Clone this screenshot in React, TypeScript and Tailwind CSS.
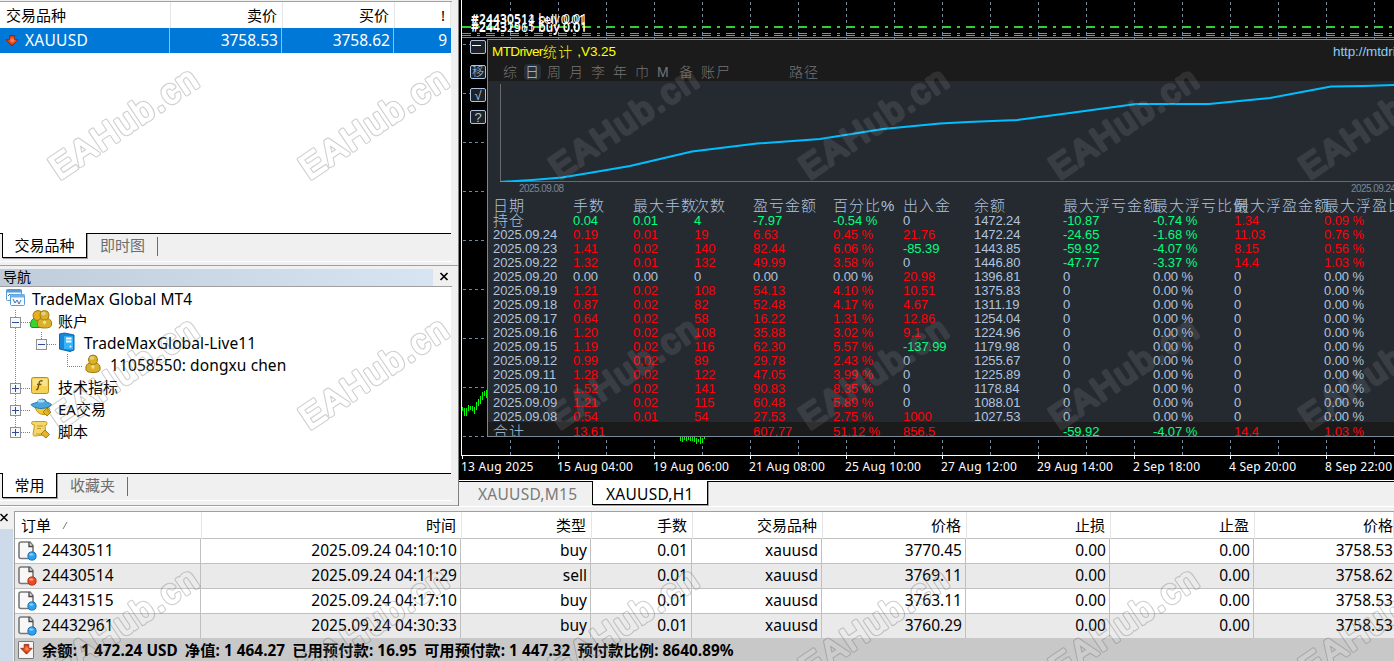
import React from "react";

const UI = "font-['Noto_Sans','Noto_Sans_CJK_SC',sans-serif]";
const CHART = "font-['Liberation_Sans','Noto_Sans_CJK_SC',sans-serif]";

function DownArrow({ className = "" }: { className?: string }) {
  return (
    <svg width="14" height="14" viewBox="0 0 14 14" className={className}>
      <defs>
        <radialGradient id="arrowFill" cx="0.55" cy="0.45" r="0.6">
          <stop offset="0" stopColor="#ff9a5a" />
          <stop offset="0.5" stopColor="#e8431a" />
          <stop offset="1" stopColor="#8f1d08" />
        </radialGradient>
      </defs>
      <path d="M4.500 1.500h5v4.200h3.600L7 12 .8 5.700h3.700z" fill="url(#arrowFill)" stroke="#8c2410" strokeWidth="0.8" />
    </svg>
  );
}

function DocIcon({ color, edge }: { color: string; edge: string }) {
  return (
    <svg width="19" height="20" viewBox="0 0 19 20" className="block">
      <path d="M1 3q0-2 2-2h9l3 3.500v11.500q0 1.500-2 1.500H3q-2 0-2-2z" fill="#f7f7f7" stroke="#787878" strokeWidth="1.600" />
      <path d="M11 1v4.500H15" fill="#dedede" stroke="#444" strokeWidth="1.300" />
      <circle cx="14" cy="15" r="4.100" fill={color} stroke={edge} />
      <ellipse cx="13.300" cy="13.500" rx="2" ry="1.300" fill="#fff" opacity="0.45" />
    </svg>
  );
}

function Person({ x, y, fill, stroke }: { x: number; y: number; fill: string; stroke: string }) {
  return (
    <g transform={`translate(${x} ${y})`}>
      <path d="M1 15.500Q0 9 5 8.500h5.500Q16 9 15 15.500 14 18 8 18t-7-2.500z" fill={fill} stroke={stroke} />
      <path d="M3.500 4.500Q4 .5 8 .5t4.500 4Q12.500 10 8 10T3.500 4.500z" fill={fill} stroke={stroke} />
      <path d="M8 10l-2 2 2 3 2-3z" fill="#fff2a0" opacity="0.7" />
      <ellipse cx="7" cy="3.500" rx="2.500" ry="1.700" fill="#fff" opacity="0.4" />
    </g>
  );
}

function TreeIcon({ kind }: { kind: string }) {
  return (
    <svg width="24" height="22" viewBox="0 0 24 22" className="block">
      {kind === "root" && (
        <g transform="translate(0 1)">
          <rect x="2.500" y="1.500" width="15" height="11" rx="1" fill="#f4faff" stroke="#5b9bd5" />
          <path d="M2.500 3h15" stroke="#5b9bd5" strokeWidth="3" />
          <path d="M4 8l2-2 2 3 2-3" fill="none" stroke="#4472a8" />
          <rect x="6.500" y="6.500" width="14" height="11" rx="1" fill="#f4faff" stroke="#5b9bd5" />
          <path d="M6.500 8h14" stroke="#6fb1ea" strokeWidth="3" />
          <path d="M9 11l2 4 2-3 2 4 2-4" fill="none" stroke="#4472a8" />
        </g>
      )}
      {kind === "accounts" && (
        <g transform="translate(0 .5)">
          <path d="M.5 17Q0 9 6 8h5l2 10H2z" fill="#35d62d" stroke="#16911a" />
          <path d="M3 5Q4 1 8 1t5 4q0 6-5 6T3 5z" fill="#e7ae22" stroke="#a87606" />
          <Person x={6.5} y={0.5} fill="#d9b02a" stroke="#a27a0c" />
        </g>
      )}
      {kind === "server" && (
        <g transform="translate(0 1)">
          <path d="M3.500 2l5-1 9.500 2v15l-4 1.500L3.500 17z" fill="#1687d9" stroke="#0b67ae" />
          <path d="M8 4l9 .5v13L8 17z" fill="#35b4fb" />
          <path d="M10 6.500h5.500M10 9.500h5.500" stroke="#fff" strokeWidth="1.800" />
          <circle cx="14.500" cy="14.500" r="1" fill="#e7f7ff" />
        </g>
      )}
      {kind === "user" && <Person x={3} y={1.5} fill="#d9b02a" stroke="#a27a0c" />}
      {kind === "fx" && (
        <g transform="translate(0 1)">
          <rect x="1.500" y="1.500" width="17" height="16" rx="2" fill="#f5d154" stroke="#b98f22" />
          <path d="M3 3h14v7H3z" fill="#fff" opacity="0.35" />
          <path d="M12.500 5q-3-1-3.300 2l-1 4.500q-.5 2.500-2.200 2M7 8.500h4.500" fill="none" stroke="#7a5605" strokeWidth="1.400" />
        </g>
      )}
      {kind === "ea" && (
        <g transform="translate(0 1)">
          <path d="M5 9q2 7 8 7.500h3l4-5-2-3z" fill="#f0c834" stroke="#bf9418" />
          <path d="M1 6.500Q4 5 7 4.500 8 1 12 1t4.500 3Q20 5 21.500 6.500 20 10 11 10.500 3 10 1 6.500z" fill="#4aa7dc" stroke="#267ab3" />
          <ellipse cx="11" cy="3" rx="3.500" ry="1.500" fill="#a6daf6" />
          <path d="M17 10l4 4-4 4-4-4z" fill="#e2b42c" stroke="#a8800f" />
        </g>
      )}
      {kind === "script" && (
        <g transform="translate(0 1)">
          <path d="M1.500 3q0-1.500 2-1.500h12q1.500 0 1.500 2t-2 2l1 9-10 1.500q-3 .5-3-1.500L4.500 5Q1.500 5 1.500 3z" fill="#f4d66a" stroke="#c29a2c" />
          <path d="M7 6h6M7 8.500h4M6 14h7" stroke="#c29a2c" />
          <path d="M15 10l4.500 4.500-3.500 3.500-5-4z" fill="#e2b42c" stroke="#a8800f" />
        </g>
      )}
    </svg>
  );
}

function MarketWatch() {
  return (
    <section className="flex h-[265px] flex-col">
      <div className="h-px bg-[#f0f0f0]" />
      <div className="h-px w-[452px] bg-[#a0a0a0]" />
      <div className="flex h-[231px] w-[451px] flex-col bg-white">
        <div className="grid h-[26px] shrink-0 grid-cols-[171px_112px_112px_56px] text-[15px] leading-[27px]">
          <div className="border-r border-[#e5e5e5] pl-[6px]">交易品种</div>
          <div className="border-r border-[#e5e5e5] pr-[5px] text-right">卖价</div>
          <div className="border-r border-[#e5e5e5] pr-[5px] text-right">买价</div>
          <div className="border-r border-[#e5e5e5] pr-[5px] text-right">!</div>
        </div>
        <div className="grid h-[25px] shrink-0 grid-cols-[170px_112px_112px_57px] bg-[#0078d7] text-[15.500px] leading-[25px] text-white">
          <div className="flex items-center border-r border-[#8cc0ee] pl-[5px]">
            <DownArrow />
            <span className="ml-[6px] tracking-[0.25px]">XAUUSD</span>
          </div>
          <div className="border-r border-[#8cc0ee] pr-[3px] text-right">3758.53</div>
          <div className="border-r border-[#8cc0ee] pr-[3px] text-right">3758.62</div>
          <div className="pr-[4px] text-right">9</div>
        </div>
      </div>
      <PanelTabs first="交易品种" second="即时图" widths="grid-cols-[85px_71px]" />
      <div className="h-[3px] w-[452px]" />
      <div className="h-px w-[452px] bg-white" />
    </section>
  );
}

function PanelTabs({ first, second, widths }: { first: string; second: string; widths: string }) {
  return (
    <div className="relative h-[25px] w-[451px] shrink-0 border-t border-black pl-[2px] text-[15px] leading-[24px]">
      <div className={`-mt-px grid h-[25px] ${widths}`}>
        <div className="border border-t-0 border-black bg-white text-center shadow-[1px_1px_0_#a0a0a0]">{first}</div>
        <div className="mt-[4px] h-[19px] border-r border-[#6d6d6d] pl-[13px] leading-[16px] text-[#6d6d6d]">{second}</div>
      </div>
    </div>
  );
}

const tree = [
  { kind: "root", label: "TradeMax Global MT4", pad: "pl-[4px]" },
  { kind: "accounts", label: "账户", pad: "pl-[30px]" },
  { kind: "server", label: "TradeMaxGlobal-Live11", pad: "pl-[56px]" },
  { kind: "user", label: "11058550: dongxu chen", pad: "pl-[82px]" },
  { kind: "fx", label: "技术指标", pad: "pl-[30px]" },
  { kind: "ea", label: "EA交易", pad: "pl-[30px]" },
  { kind: "script", label: "脚本", pad: "pl-[30px]" },
];

function TreeLines() {
  const boxes = [
    { x: 10, y: 30, plus: false },
    { x: 36, y: 52, plus: false },
    { x: 10, y: 96, plus: true },
    { x: 10, y: 118, plus: true },
    { x: 10, y: 140, plus: true },
  ];
  return (
    <svg className="absolute left-0 top-0" width="90" height="180" shapeRendering="crispEdges">
      <path
        d="M15.500 23V145M21 35.500H30M41.500 45V55M47 57.500H56M67.500 67V79.500H82M21 101.500H30M21 123.500H30M21 145.500H30"
        fill="none"
        stroke="#808080"
        strokeDasharray="1 1"
      />
      {boxes.map((b) => (
        <g key={`${b.x}-${b.y}`}>
          <rect x={b.x + 0.5} y={b.y + 0.5} width="10" height="10" fill="#f8f8f8" stroke="#919191" />
          <path d={`M${b.x + 2} ${b.y + 5.5}h7${b.plus ? "m-3.500 -3.500v7" : ""}`} stroke="#2b4f9e" />
        </g>
      ))}
    </svg>
  );
}

function Navigator() {
  return (
    <section className="flex h-[241px] flex-col">
      <div className="h-px w-[458px] bg-[#a0a0a0]" />
      <div className="mt-[3px] flex h-[17px] shrink-0">
        <div className="w-[433px] bg-gradient-to-r from-[#bfccda] to-[#d7e4f2] pl-[3px] text-[14px] leading-[16px]">导航</div>
        <svg width="24" height="17" viewBox="0 0 24 17">
          <path d="M7.500 4l7 7M14.500 4l-7 7" stroke="#000" strokeWidth="1.700" />
        </svg>
      </div>
      <div className="h-px w-[452px] shrink-0 bg-[#a0a0a0]" />
      <div className="relative h-[186px] w-[451px] shrink-0 bg-white">
        <TreeLines />
        {tree.map((t) => (
          <div key={t.kind} className={`relative flex h-[22px] items-center ${t.pad}`}>
            <TreeIcon kind={t.kind} />
            <span
              className={`ml-[4px] whitespace-nowrap pt-px leading-[22px] ${/^[\x20-\x7e]+$/.test(t.label) ? "text-[15.500px] tracking-[0.1px]" : "text-[15px]"}`}
            >
              {t.label}
            </span>
          </div>
        ))}
      </div>
      <PanelTabs first="常用" second="收藏夹" widths="grid-cols-[55px_71px]" />
      <div className="h-[2px]" />
      <div className="h-px w-[452px] bg-white" />
      <div className="mt-[4px] h-px w-[458px] shrink-0 bg-[#a0a0a0]" />
    </section>
  );
}

const D = "text-[#b0c4de]";
const R = "text-[#ff0008]";
const G = "text-[#00ff7f]";

const headers = ["日期", "手数", "最大手数", "次数", "盈亏金额", "百分比%", "出入金", "余额", "最大浮亏金额", "最大浮亏比例", "最大浮盈金额", "最大浮盈比例"];

const rows: string[][] = [
  ["持仓", "0.04", "0.01", "4", "-7.97", "-0.54 %", "0", "1472.24", "-10.87", "-0.74 %", "1.34", "0.09 %"],
  ["2025.09.24", "0.19", "0.01", "19", "6.63", "0.45 %", "21.76", "1472.24", "-24.65", "-1.68 %", "11.03", "0.76 %"],
  ["2025.09.23", "1.41", "0.02", "140", "82.44", "6.06 %", "-85.39", "1443.85", "-59.92", "-4.07 %", "8.15", "0.56 %"],
  ["2025.09.22", "1.32", "0.01", "132", "49.99", "3.58 %", "0", "1446.80", "-47.77", "-3.37 %", "14.4", "1.03 %"],
  ["2025.09.20", "0.00", "0.00", "0", "0.00", "0.00 %", "20.98", "1396.81", "0", "0.00 %", "0", "0.00 %"],
  ["2025.09.19", "1.21", "0.02", "108", "54.13", "4.10 %", "10.51", "1375.83", "0", "0.00 %", "0", "0.00 %"],
  ["2025.09.18", "0.87", "0.02", "82", "52.48", "4.17 %", "4.67", "1311.19", "0", "0.00 %", "0", "0.00 %"],
  ["2025.09.17", "0.64", "0.02", "58", "16.22", "1.31 %", "12.86", "1254.04", "0", "0.00 %", "0", "0.00 %"],
  ["2025.09.16", "1.20", "0.02", "108", "35.88", "3.02 %", "9.1", "1224.96", "0", "0.00 %", "0", "0.00 %"],
  ["2025.09.15", "1.19", "0.02", "116", "62.30", "5.57 %", "-137.99", "1179.98", "0", "0.00 %", "0", "0.00 %"],
  ["2025.09.12", "0.99", "0.02", "89", "29.78", "2.43 %", "0", "1255.67", "0", "0.00 %", "0", "0.00 %"],
  ["2025.09.11", "1.28", "0.02", "122", "47.05", "3.99 %", "0", "1225.89", "0", "0.00 %", "0", "0.00 %"],
  ["2025.09.10", "1.52", "0.02", "141", "90.83", "8.35 %", "0", "1178.84", "0", "0.00 %", "0", "0.00 %"],
  ["2025.09.09", "1.21", "0.02", "115", "60.48", "5.89 %", "0", "1088.01", "0", "0.00 %", "0", "0.00 %"],
  ["2025.09.08", "0.54", "0.01", "54", "27.53", "2.75 %", "1000", "1027.53", "0", "0.00 %", "0", "0.00 %"],
];
const total = ["合计", "13.61", "", "", "607.77", "51.12 %", "856.5", "", "-59.92", "-4.07 %", "14.4", "1.03 %"];

const COLS = "grid grid-cols-[80px_60px_61px_59px_80px_70px_71px_89px_90px_81px_90px_70px] w-[901px] whitespace-nowrap";

function tone(value: string, col: number, first: boolean) {
  if (col === 0 || col === 7 || parseFloat(value) === 0) return D;
  if (value.startsWith("-")) return G;
  if (first && col < 4) return G;
  return R;
}

function StatRow({ cells, first = false }: { cells: string[]; first?: boolean }) {
  return (
    <div className={`${COLS} h-[14px] text-[13px] leading-[14px] tracking-[-0.1px]`}>
      {cells.map((c, i) => (
        <div key={i} className={`h-[14px] ${tone(c, i, first)} ${i === 0 && !c.startsWith("2") ? "text-[15px] font-light tracking-[1px]" : ""}`}>
          {c}
        </div>
      ))}
    </div>
  );
}

const menu = [
  { t: "综", w: "w-[22px]" },
  { t: "日", w: "w-[22px]" },
  { t: "周", w: "w-[22px]" },
  { t: "月", w: "w-[22px]" },
  { t: "李", w: "w-[22px]" },
  { t: "年", w: "w-[22px]" },
  { t: "巾", w: "w-[22px]" },
  { t: "M", w: "w-[22px]" },
  { t: "备", w: "w-[22px]" },
  { t: "账尸", w: "w-[88px]" },
  { t: "路径", w: "w-[40px]" },
];

function StatsPanel() {
  return (
    <div className={`flex h-[398px] w-[907px] flex-col border-b border-l border-t border-[#778899] bg-[#252a31] ${CHART}`}>
      <div className="h-[41px] shrink-0 bg-[#1b1b1b]">
        <div className="flex h-[22px] items-center justify-between pl-[4px] text-[13.500px] leading-[24px]">
          <div className="flex whitespace-pre pt-px text-[#ffff00]">
            <span className="tracking-[-0.6px]">MTDriver</span>
            <span className="text-[14px] font-light tracking-[1.500px]">统计</span>
            <span className="tracking-[-0.1px]"> ,V3.25</span>
          </div>
          <div className="w-[61px] overflow-hidden whitespace-nowrap pt-px tracking-[-0.1px] text-[#87cefa]">http://mtdriver</div>
        </div>
        <div className="flex h-[19px] pl-[15px] text-[14px] font-light leading-[21px] text-[#757575]">
          {menu.map((m) => (
            <div key={m.t} className={`${m.w} shrink-0 tracking-[1px]`}>
              {m.t === "日" ? (
                <span className="-ml-px mt-[2px] block h-[16px] w-[17px] rounded-sm bg-[#252f3a] text-center leading-[17px] text-[#b0c4de]">日</span>
              ) : (
                m.t
              )}
            </div>
          ))}
        </div>
      </div>
      <svg className="block h-[101px] w-[906px] shrink-0" viewBox="488 81 906 101">
        <path d="M500.500 84V181.500H1394" fill="none" stroke="#696969" shapeRendering="crispEdges" />
        <path
          d="M500 182L532 180 562 177.500 592 172.500 630 166 692 151.500 757 143.500 820 139 883 129 940 123.500 968 122 1017 120 1070 113 1136 104 1209 104 1270 98 1331 86.500 1364 86 1394 85"
          fill="none"
          stroke="#00bfff"
          strokeWidth="2"
        />
      </svg>
      <div className="flex h-[16px] shrink-0 justify-between pl-[31px] text-[10px] leading-[14px] tracking-[-0.550px] text-[#778899]">
        <span>2025.09.08</span>
        <span className="w-[43px] overflow-hidden">2025.09.24</span>
      </div>
      <div className="h-[224px] shrink-0 pl-[5px]">
        <div className={`${COLS} h-[16px] text-[15px] font-light leading-[16px] tracking-[1px] ${D}`}>
          {headers.map((h) => (
            <div key={h}>{h}</div>
          ))}
        </div>
        {rows.map((r, i) => (
          <StatRow key={i} cells={r} first={i === 0} />
        ))}
      </div>
      <div className="h-[14px] overflow-hidden bg-[#1b1b1b] pl-[5px] pt-[3px]">
        <StatRow cells={total} />
      </div>
    </div>
  );
}

const gridX = Array.from({ length: 19 }, (_, i) => 510 + i * 48);
const gridY = [44, 93, 142, 191, 240, 289, 338, 387, 436];
const times = ["13 Aug 2025", "15 Aug 04:00", "19 Aug 06:00", "21 Aug 08:00", "25 Aug 10:00", "27 Aug 12:00", "29 Aug 14:00", "2 Sep 18:00", "4 Sep 20:00", "8 Sep 22:00"];

function ChartBackdrop() {
  const left = [[462, 407, 411], [464, 408, 416], [466, 408, 416], [468, 405, 411], [470, 406, 410], [472, 406, 411], [474, 407, 414], [476, 402, 410], [478, 399, 406], [480, 396, 404], [482, 393, 401], [484, 393, 398], [486, 393, 401]];
  const right = [[680, 437, 441], [682, 437, 442], [684, 437, 440], [686, 437, 441], [688, 437, 440], [690, 437, 441], [692, 437, 441], [694, 437, 442], [696, 438, 444], [698, 439, 442], [700, 437, 444], [702, 438, 443], [704, 437, 439]];
  return (
    <svg className="absolute left-0 top-0" width="935" height="480" viewBox="459 0 935 480" shapeRendering="crispEdges">
      {gridX.map((x) => (
        <path key={x} d={`M${x + 0.5} 2V39M${x + 0.5} 440V455`} stroke="#778899" strokeDasharray="3 3" />
      ))}
      {gridY.map((y) => (
        <path key={y} d={`M463 ${y + 0.5}H487`} stroke="#778899" strokeDasharray="3 3" />
      ))}
      <g stroke="#32cd32" strokeDasharray="9 6 3 6">
        <path d="M462 27H1394" strokeWidth="2" />
        <path d="M462 33.500H1394M462 35.500H1394" />
      </g>
      <path d="M462 37.500H1394" stroke="#778899" />
      <path d="M461.500 0V455.500H1394" fill="none" stroke="#fff" />
      {Array.from({ length: 10 }, (_, i) => (
        <path key={i} d={`M${462.5 + i * 96} 455v4`} stroke="#fff" />
      ))}
      {left.map(([x, a, b], i) => (
        <path key={x} d={`M${x + 0.5} ${a - Math.max(0, i - 9)}V${b - Math.max(0, i - 9)}`} stroke="#00ff00" />
      ))}
      {right.map(([x, a, b]) => (
        <path key={x} d={`M${x + 0.5} ${a}V${b}`} stroke="#00ff00" />
      ))}
    </svg>
  );
}

function SideButtons() {
  const box = "h-[14px] w-[16px] overflow-hidden rounded-[2px] border border-[#b0c4de] bg-[#1d2228] text-center text-[13px] leading-[13px] text-[#b0c4de]";
  return (
    <div className={`flex w-[28px] flex-col items-start pl-[11px] pt-[1px] ${CHART}`}>
      <div className={box}>
        <svg width="14" height="12"><path d="M1 4.500h9" stroke="#fff" shapeRendering="crispEdges" /></svg>
      </div>
      <div className={`${box} mt-[11px] font-light`}>
        <span className="block text-[12px] leading-[12px]">移</span>
      </div>
      <div className={`${box} mt-[9px]`}>√</div>
      <div className={`${box} mt-[8px]`}>?</div>
    </div>
  );
}

function ChartArea() {
  const order = `absolute left-[12px] whitespace-nowrap text-[12px] leading-[12px] text-white tracking-[0.150px] ${UI}`;
  return (
    <section className="relative h-[480px] w-[935px] overflow-hidden bg-black">
      <ChartBackdrop />
      <div className={`${order} top-[13px]`}>#24430511 buy 0.01</div>
      <div className={`${order} top-[14px]`}>#24430514 sell 0.01</div>
      <div className={`${order} top-[21px]`}>#24431515 buy 0.01</div>
      <div className={`${order} top-[22px]`}>#24432961 buy 0.01</div>
      <div className="relative flex pt-[39px]">
        <SideButtons />
        <StatsPanel />
      </div>
      <div className={`relative mt-[22px] flex pl-[2px] text-[12px] leading-[16px] tracking-[0.250px] text-white ${UI}`}>
        {times.map((t) => (
          <div key={t} className="w-[96px] shrink-0 whitespace-nowrap">{t}</div>
        ))}
      </div>
    </section>
  );
}

function ChartTabs() {
  return (
    <div className="flex h-[25px] border-t border-white text-[15.500px] leading-[24px] tracking-[0.250px]">
      <div className="w-[133px] border-t border-black pl-[19px] text-[#7a7a7a]">XAUUSD,M15</div>
      <div className="h-[24px] w-[116px] border border-t-0 border-black bg-white pl-[13px] pt-px shadow-[1px_1px_0_#a0a0a0]">XAUUSD,H1</div>
      <div className="flex-1 border-t border-black" />
    </div>
  );
}

const orders = [
  ["24430511", "2025.09.24 04:10:10", "buy", "0.01", "xauusd", "3770.45", "0.00", "0.00", "3758.53"],
  ["24430514", "2025.09.24 04:11:29", "sell", "0.01", "xauusd", "3769.11", "0.00", "0.00", "3758.62"],
  ["24431515", "2025.09.24 04:17:10", "buy", "0.01", "xauusd", "3763.11", "0.00", "0.00", "3758.53"],
  ["24432961", "2025.09.24 04:30:33", "buy", "0.01", "xauusd", "3760.29", "0.00", "0.00", "3758.53"],
];
const orderHeads = ["时间", "类型", "手数", "交易品种", "价格", "止损", "止盈", "价格"];

function Terminal() {
  return (
    <section className="flex h-[150px]">
      <div className="flex w-[14px] flex-col">
        <div className="h-[18px]">
          <svg width="10" height="14"><path d="M.5 3l7 7M7.500 3l-7 7" stroke="#000" strokeWidth="1.500" /></svg>
        </div>
        <div className="w-[13px] flex-1 bg-[#cddaea]" />
      </div>
      <div className="w-[1380px] overflow-hidden border-l border-t border-[#a0a0a0] bg-white">
        <div className="grid h-[26px] grid-cols-[187px_260px_130px_101px_130px_144px_144px_144px_139px] text-[15px] leading-[27px]">
          <div className="flex items-center border-r border-[#e5e5e5] pl-[6px]">
            订单
            <svg width="8" height="10" className="ml-[11px]"><path d="M1 8L5 1" stroke="#777" /></svg>
          </div>
          {orderHeads.map((h, i) => (
            <div key={i} className={`border-r border-[#e5e5e5] text-right ${i === 7 ? "pr-0" : "pr-[5px]"}`}>{h}</div>
          ))}
        </div>
        {orders.map((o, r) => (
          <div
            key={r}
            className={`grid h-[25px] grid-cols-[186px_260px_130px_101px_130px_144px_144px_144px_140px] border-t border-[#c0c0c0] text-[15.500px] leading-[23px] ${r % 2 ? "bg-[#eaeaea]" : "bg-white"}`}
          >
            {o.map((c, i) =>
              i === 0 ? (
                <div key={i} className="flex items-center border-r border-[#c0c0c0] pl-[3px]">
                  <DocIcon color={r === 1 ? "#ee4a22" : "#2aa2f0"} edge={r === 1 ? "#b0300f" : "#0f70bb"} />
                  <span className="ml-[5px] -translate-y-px tracking-[0.1px]">{c}</span>
                </div>
              ) : (
                <div key={i} className={`text-right ${i === 8 ? "pr-[1px]" : "border-r border-[#c0c0c0] pr-[3px]"} ${i === 1 ? "tracking-[0.050px]" : ""}`}>{c}</div>
              ),
            )}
          </div>
        ))}
        <div className="flex h-[23px] items-center bg-[#c8c8c8] pl-[3px]">
          <div className="flex h-[18px] w-[16px] items-center justify-center rounded-[1px] border border-[#777] bg-[#f5f5f5]">
            <DownArrow className="h-[13px] w-[13px] shrink-0" />
          </div>
          <div className="ml-[8px] flex gap-[7px] whitespace-nowrap pt-[2px] text-[15.300px] font-bold leading-[23px] tracking-[0.060px]">
            <span>余额: 1 472.24 USD</span>
            <span>净值: 1 464.27</span>
            <span>已用预付款: 16.95</span>
            <span>可用预付款: 1 447.32</span>
            <span>预付款比例: 8640.89%</span>
          </div>
        </div>
      </div>
    </section>
  );
}

function Watermarks() {
  const marks: number[][] = [];
  for (let y = 0; y < 3; y++) for (let x = 0; x < 6; x++) marks.push([124 + x * 250, 124 + y * 250]);
  const text = {
    x: 0,
    y: 10.5,
    textAnchor: "middle" as const,
    textLength: 170,
    fontSize: 34,
    fontFamily: "Liberation Sans, sans-serif",
    strokeLinejoin: "round" as const,
  };
  return (
    <svg className="pointer-events-none absolute left-0 top-0" width="1394" height="661">
      <defs>
        <mask id="ring" maskUnits="userSpaceOnUse" x="-100" y="-40" width="200" height="80">
          <text {...text} fill="#fff" stroke="#fff" strokeWidth="4">EAHub.cn</text>
          <text {...text} fill="#000" stroke="#000" strokeWidth="2">EAHub.cn</text>
        </mask>
      </defs>
      {marks.map(([x, y]) => (
        <g key={`${x}-${y}`} transform={`translate(${x} ${y}) rotate(-34)`}>
          <text {...text} fill="#fff" stroke="#fff" strokeWidth="3" opacity="0.09">EAHub.cn</text>
          <rect x="-100" y="-40" width="200" height="80" fill="#484848" opacity="0.27" mask="url(#ring)" />
        </g>
      ))}
    </svg>
  );
}

export default function App() {
  return (
    <div className={`relative flex h-[661px] w-[1394px] flex-col overflow-hidden bg-[#f0f0f0] text-black ${UI}`}>
      <div className="flex h-[506px]">
        <div className="w-[459px] shrink-0 border-r border-[#808080]">
          <MarketWatch />
          <Navigator />
        </div>
        <div className="w-[935px]">
          <ChartArea />
          <ChartTabs />
        </div>
      </div>
      <div className="mb-[4px] h-px bg-white" />
      <Terminal />
      <Watermarks />
    </div>
  );
}
